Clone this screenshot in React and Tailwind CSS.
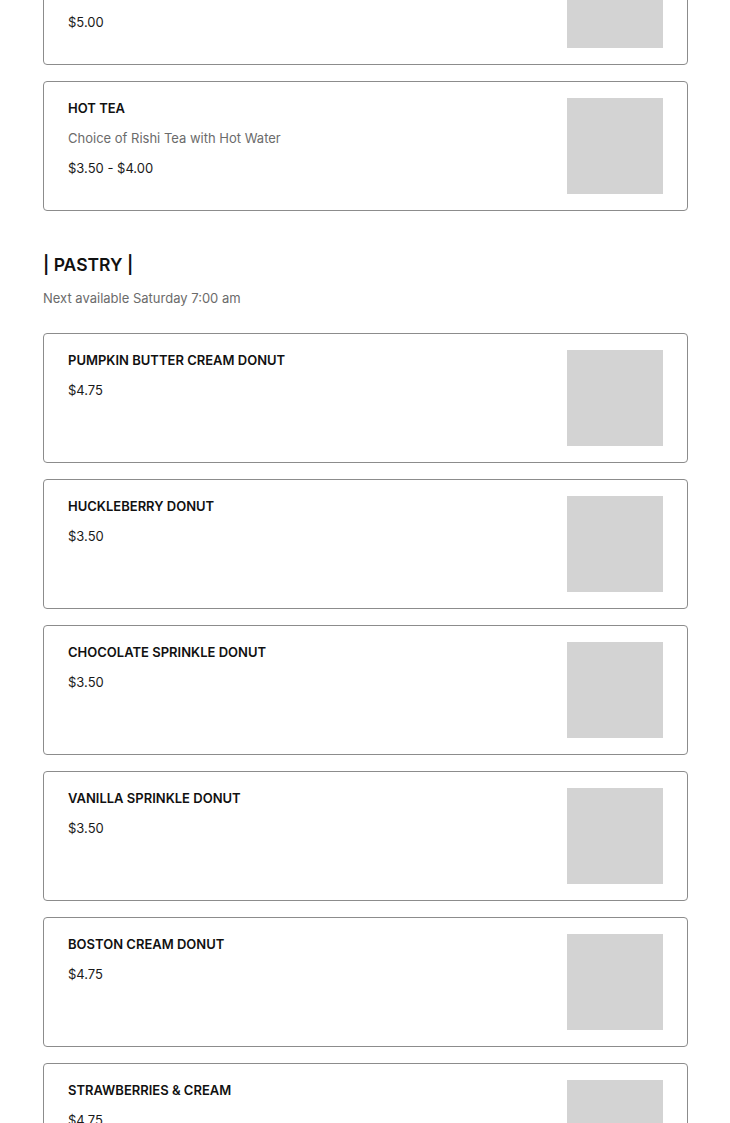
import React from "react";

const drinks = [
  {
    name: "ICED TEA",
    description: "Choice of Rishi Tea over Ice with Lemonade Splash",
    price: "$5.00",
  },
  {
    name: "HOT TEA",
    description: "Choice of Rishi Tea with Hot Water",
    price: "$3.50 - $4.00",
  },
];

const pastries = [
  { name: "PUMPKIN BUTTER CREAM DONUT", price: "$4.75" },
  { name: "HUCKLEBERRY DONUT", price: "$3.50" },
  { name: "CHOCOLATE SPRINKLE DONUT", price: "$3.50" },
  { name: "VANILLA SPRINKLE DONUT", price: "$3.50" },
  { name: "BOSTON CREAM DONUT", price: "$4.75" },
  { name: "STRAWBERRIES & CREAM", price: "$4.75" },
];

const MenuItem = ({ item }) => (
  <div className="flex justify-between border border-[#8c8c8c] rounded-[4px] pl-6 pr-6 py-4 mb-4 bg-white">
    <div className="flex flex-col">
      <div className="text-[13px] leading-5 font-semibold text-[#111] mb-2.5">
        {item.name}
      </div>
      {item.description && (
        <div className="text-[13px] leading-5 text-[#6b6b6b] mb-2.5">{item.description}</div>
      )}
      <div className="text-[13px] leading-5 text-[#1a1a1a]">{item.price}</div>
    </div>
    <div className="w-24 h-24 bg-[#d3d3d3] shrink-0" />
  </div>
);

export default function App() {
  return (
    <div
      className="h-[1123px] overflow-hidden bg-white"
      style={{ fontFamily: "Inter, 'Liberation Sans', sans-serif" }}
    >
      <div className="px-[43px] -mt-[65px] w-[731px]">
        {drinks.map((item) => (
          <MenuItem key={item.name} item={item} />
        ))}

        <div className="pt-[24px] pb-[25px]">
          <h2 className="text-[17.5px] leading-7 font-semibold text-[#111]">| PASTRY |</h2>
          <p className="text-[13px] leading-5 text-[#6b6b6b] mt-[9px]">
            Next available Saturday 7:00 am
          </p>
        </div>

        {pastries.map((item) => (
          <MenuItem key={item.name} item={item} />
        ))}
      </div>
    </div>
  );
}
